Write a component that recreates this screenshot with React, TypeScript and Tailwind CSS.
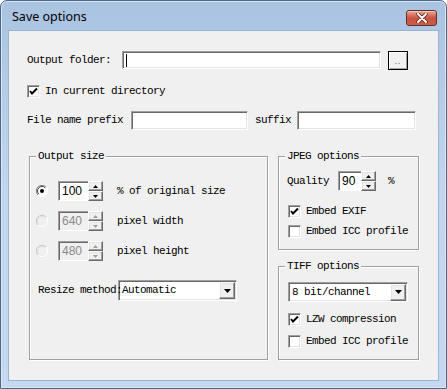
import React from 'react';

const mono = "font-['Liberation_Mono',monospace] text-[11px] tracking-[-0.6px] text-black leading-none whitespace-nowrap";
const sunken =
  'bg-white border border-t-[#a0a0a0] border-l-[#a0a0a0] border-b-white border-r-white shadow-[inset_1px_1px_0_#696969,inset_-1px_-1px_0_#e3e3e3]';
const raised =
  'bg-[#f0f0f0] border border-t-white border-l-white border-b-[#696969] border-r-[#696969] shadow-[inset_-1px_-1px_0_#a0a0a0,inset_1px_1px_0_#e3e3e3]';

function Checkbox({ checked }: { checked?: boolean }) {
  return (
    <div className={`w-[13px] h-[13px] shrink-0 flex items-center justify-center ${sunken}`}>
      {checked && (
        <svg width="9" height="9" viewBox="0 0 9 9">
          <path d="M1 4 L3 6.5 L8 1.5" stroke="#000" strokeWidth="2" fill="none" />
        </svg>
      )}
    </div>
  );
}

function Radio({ checked, disabled }: { checked?: boolean; disabled?: boolean }) {
  return (
    <svg width="12" height="12" viewBox="0 0 12 12" className="shrink-0">
      <circle cx="6" cy="6" r="5.5" fill={disabled ? '#f0f0f0' : '#fff'} />
      <path d="M10 2 A5.5 5.5 0 0 0 2 10" stroke={disabled ? '#c8c8c8' : '#808080'} strokeWidth="1" fill="none" />
      <path d="M9.2 2.8 A4.5 4.5 0 0 0 2.8 9.2" stroke={disabled ? '#e0e0e0' : '#404040'} strokeWidth="1" fill="none" />
      <path d="M2 10 A5.5 5.5 0 0 0 10 2" stroke="#fff" strokeWidth="1" fill="none" />
      {checked && <circle cx="6" cy="6" r="2" fill="#000" />}
    </svg>
  );
}

function Spin({ value, width, disabled }: { value: string; width: number; disabled?: boolean }) {
  const arrow = disabled ? '#a0a0a0' : '#000';
  return (
    <div className="flex h-[20px]">
      <div
        className={`h-[20px] flex items-center pl-[3px] font-['Liberation_Sans',Arial,sans-serif] text-[12px] ${
          disabled ? 'text-[#8a8a8a] bg-[#f0f0f0]' : 'text-black bg-white'
        } border border-t-[#a0a0a0] border-l-[#a0a0a0] border-b-white border-r-0 shadow-[inset_1px_1px_0_#696969]`}
        style={{ width }}
      >
        {value}
      </div>
      <div className="flex flex-col w-[15px] h-[20px]">
        <div className={`h-[10px] flex items-center justify-center ${raised}`}>
          <svg width="5" height="3" viewBox="0 0 5 3">
            <path d="M2.5 0 L5 3 L0 3 Z" fill={arrow} />
          </svg>
        </div>
        <div className={`h-[10px] flex items-center justify-center ${raised}`}>
          <svg width="5" height="3" viewBox="0 0 5 3">
            <path d="M0 0 L5 0 L2.5 3 Z" fill={arrow} />
          </svg>
        </div>
      </div>
    </div>
  );
}

function Combo({ text, width, height }: { text: string; width: number; height: number }) {
  return (
    <div className={`flex items-center ${sunken}`} style={{ width, height }}>
      <span className={`${mono} flex-1 pl-[3px]`}>{text}</span>
      <div className={`w-[16px] h-[17px] mr-[1px] flex items-center justify-center ${raised}`}>
        <svg width="7" height="4" viewBox="0 0 7 4">
          <path d="M0 0 L7 0 L3.5 4 Z" fill="#000" />
        </svg>
      </div>
    </div>
  );
}

function Group({ title, className, children }: { title: string; className: string; children: React.ReactNode }) {
  return (
    <div className={`relative border border-[#a0a0a0] shadow-[1px_1px_0_#fff,inset_1px_1px_0_#fff] ${className}`}>
      <span className={`${mono} absolute -top-[6px] left-[6px] bg-[#f0f0f0] px-[2px]`}>{title}</span>
      {children}
    </div>
  );
}

export default function App() {
  return (
    <div className="w-[447px] h-[389px] bg-white">
      <div className="w-[447px] h-[389px] flex flex-col rounded-t-[7px] border border-[#4d6786] bg-gradient-to-b from-[#a9c3e1] via-[#c2d7ee] to-[#c4d9ef] px-[7px] pb-[7px] shadow-[inset_0_0_0_1px_#d8e6f5]">
        <div className="h-[29px] flex items-center justify-between pl-[4px] pr-[2px]">
          <span className="font-['Noto_Sans',sans-serif] text-[12.5px] text-black mt-[3px]">Save options</span>
          <div className="w-[31px] h-[16px] mt-[5px] rounded-[3px] border border-[#6e2a21] bg-gradient-to-b from-[#e9a99b] via-[#c9523f] to-[#c4604b] flex items-center justify-center shadow-[inset_0_1px_0_#f4c6ba]">
            <svg width="12" height="10" viewBox="0 0 12 10">
              <path d="M2 1 L10 9 M10 1 L2 9" stroke="#5c1e16" strokeWidth="3.4" strokeLinecap="round" />
              <path d="M2 1 L10 9 M10 1 L2 9" stroke="#fff" strokeWidth="2" strokeLinecap="round" />
            </svg>
          </div>
        </div>
        <div className="flex-1 bg-[#f0f0f0] border border-[#9cb3cf] pl-[18px] flex flex-col">
          <div className="mt-[19px] flex items-center h-[20px]">
            <span className={`${mono} w-[95px]`}>Output folder:</span>
            <div className={`w-[259px] h-[18px] flex items-center pl-[3px] ${sunken}`}>
              <div className="w-px h-[13px] bg-black" />
            </div>
            <div className="ml-[7px] w-[20px] h-[19px] border border-black bg-[#f0f0f0] shadow-[inset_1px_1px_0_#fff,inset_-1px_-1px_0_#a0a0a0] flex items-end justify-center pb-[4px]">
              <span className="text-[#555] text-[8px] leading-none tracking-[1px]">..</span>
            </div>
          </div>
          <div className="mt-[14px] flex items-center h-[14px]">
            <Checkbox checked />
            <span className={`${mono} ml-[5px]`}>In current directory</span>
          </div>
          <div className="mt-[13px] flex items-center h-[19px]">
            <span className={`${mono} w-[104px]`}>File name prefix</span>
            <div className={`w-[117px] h-[19px] ${sunken}`} />
            <span className={`${mono} ml-[7px] w-[42px]`}>suffix</span>
            <div className={`w-[119px] h-[19px] ${sunken}`} />
          </div>
          <div className="mt-[26px] ml-[2px] flex">
            <Group title="Output size" className="w-[239px] h-[204px] pt-[24px] pl-[6px]">
              <div className="flex items-center h-[20px]">
                <Radio checked />
                <div className="ml-[10px]">
                  <Spin value="100" width={30} />
                </div>
                <span className={`${mono} ml-[14px]`}>% of original size</span>
              </div>
              <div className="mt-[10px] flex items-center h-[20px]">
                <Radio disabled />
                <div className="ml-[10px]">
                  <Spin value="640" width={30} disabled />
                </div>
                <span className={`${mono} ml-[14px]`}>pixel width</span>
              </div>
              <div className="mt-[10px] flex items-center h-[20px]">
                <Radio disabled />
                <div className="ml-[10px]">
                  <Spin value="480" width={30} disabled />
                </div>
                <span className={`${mono} ml-[14px]`}>pixel height</span>
              </div>
              <div className="mt-[19px] flex items-center h-[21px] ml-[2px]">
                <span className={`${mono} relative z-10 w-[80px]`}>Resize method:</span>
                <Combo text="Automatic" width={119} height={21} />
              </div>
            </Group>
            <div className="ml-[10px] flex flex-col">
              <Group title="JPEG options" className="w-[141px] h-[94px] pt-[14px] pl-[8px]">
                <div className="flex items-center h-[20px]">
                  <span className={`${mono} w-[51px]`}>Quality</span>
                  <Spin value="90" width={23} />
                  <span className={`${mono} ml-[12px]`}>%</span>
                </div>
                <div className="mt-[14px] ml-[1px] flex items-center h-[13px]">
                  <Checkbox checked />
                  <span className={`${mono} ml-[5px]`}>Embed EXIF</span>
                </div>
                <div className="mt-[7px] ml-[1px] flex items-center h-[13px]">
                  <Checkbox />
                  <span className={`${mono} ml-[5px]`}>Embed ICC profile</span>
                </div>
              </Group>
              <Group title="TIFF options" className="mt-[16px] w-[141px] h-[94px] pt-[15px] pl-[9px]">
                <Combo text="8 bit/channel" width={120} height={20} />
                <div className="mt-[11px] flex items-center h-[13px]">
                  <Checkbox checked />
                  <span className={`${mono} ml-[5px]`}>LZW compression</span>
                </div>
                <div className="mt-[9px] flex items-center h-[13px]">
                  <Checkbox />
                  <span className={`${mono} ml-[5px]`}>Embed ICC profile</span>
                </div>
              </Group>
            </div>
          </div>
        </div>
      </div>
    </div>
  );
}
